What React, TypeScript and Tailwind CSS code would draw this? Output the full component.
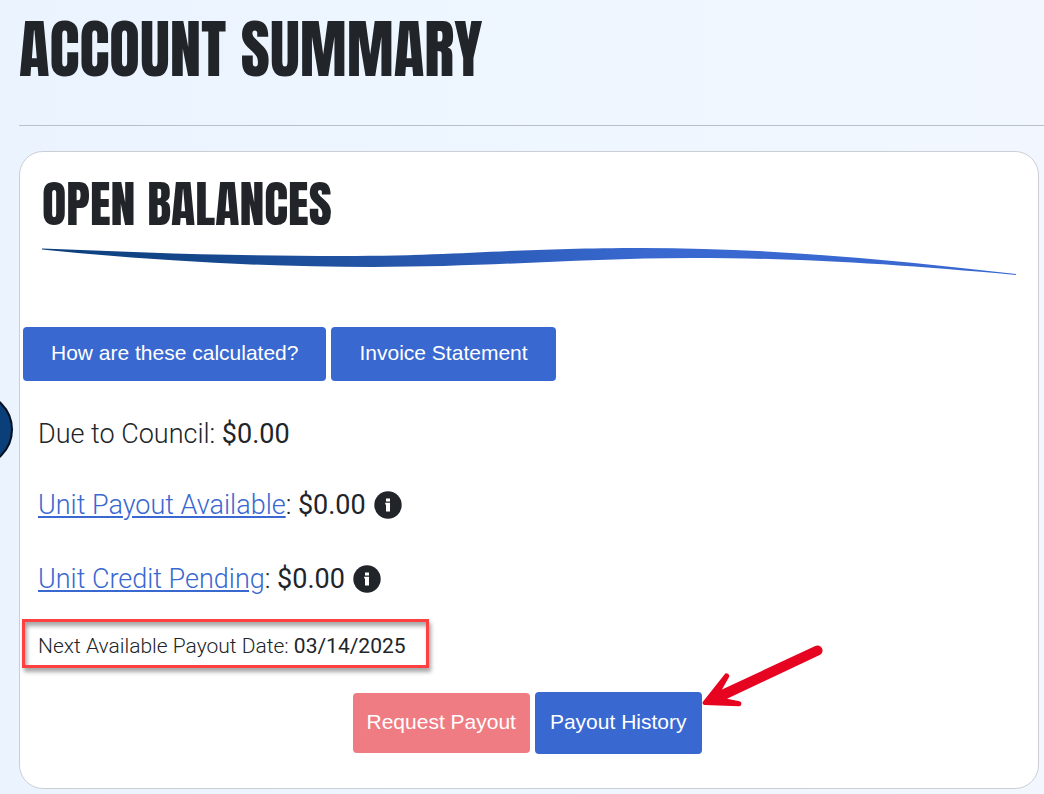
const headingFont = "font-['Anton','Impact','Liberation_Sans_Narrow',sans-serif]";
const bodyFont = "font-['Roboto',sans-serif]";
const buttonFont = "font-['Liberation_Sans',Arial,sans-serif]";

function Swoosh() {
  return (
    <svg
      viewBox="0 0 974 28"
      preserveAspectRatio="none"
      className="h-7 w-full"
      aria-hidden="true"
    >
      <defs>
        <linearGradient id="swoosh" x1="0" x2="1" y1="0" y2="0">
          <stop offset="0" stopColor="#0b3f7a" />
          <stop offset="0.15" stopColor="#14468a" />
          <stop offset="0.62" stopColor="#3968d0" />
          <stop offset="1" stopColor="#3968d0" />
        </linearGradient>
      </defs>
      <path
        fill="url(#swoosh)"
        d="M0 0.500 C95 4.500 190 8 300 8 C420 8 470 0 600 0 C730 0 850 12 974 26 V27 C850 16 760 10 650 10 C540 10 450 19 330 19 C220 19 110 12.500 0 1.500 Z"
      />
    </svg>
  );
}

function InfoIcon() {
  return (
    <svg viewBox="0 0 28 28" className="size-7" aria-hidden="true">
      <circle cx="14" cy="14" r="13.700" fill="#212529" />
      <path fill="#fff" d="M12 7.500h4v3h-4z M11.200 11.800h4.800v8.700h-4v-7h-0.800z" />
    </svg>
  );
}

function Arrow() {
  return (
    <svg
      viewBox="0 0 124 66"
      className="pointer-events-none absolute -top-12 left-full h-[66px] w-[124px]"
      aria-hidden="true"
    >
      <path
        fill="#e60420"
        d="M113.300 2 A5 5 0 0 1 117.700 11 L25 54.800 L37.500 57.200 A2.600 2.600 0 0 1 37 62.300 L2.500 61 A2.300 2.300 0 0 1 0.700 58 L22.300 30.800 A2.600 2.600 0 0 1 26.900 33.300 L20 45.500 Z"
      />
    </svg>
  );
}

type BalanceProps = {
  label: string;
  amount: string;
};

function Balance({ label, amount }: BalanceProps) {
  return (
    <div className="flex items-center text-[27px] leading-8">
      <p>
        <a href="#" className="text-[#3968d0] underline">
          {label}
        </a>
        : <span className="font-normal">{amount}</span>
      </p>
      <button type="button" aria-label={`About ${label}`} className="ml-2">
        <InfoIcon />
      </button>
    </div>
  );
}

export default function App() {
  return (
    <div
      className={`relative min-h-screen overflow-hidden bg-linear-to-r from-[#ebf3ff] via-[#eef6ff] to-[#f2f7ff] pb-1 pl-[19px] font-light text-[#212529] ${bodyFont}`}
    >
      <button
        type="button"
        aria-label="Open menu"
        className="absolute top-[392px] -left-[62px] size-[75px] rounded-full border-2 border-[#04101f] bg-[#0b3f7a]"
      />

      <header className="border-b border-[#b9c0ca] pt-3.5 pb-[39px]">
        <h1 className={`text-[63px] leading-[72px] font-normal uppercase ${headingFont}`}>
          Account Summary
        </h1>
      </header>

      <main className="mt-[25px] mr-[5px] rounded-3xl border border-[#cbcfd4] bg-white px-[3px] pb-[34px]">
        <div className="px-[19px] pt-6">
          <h2 className={`text-[50px] leading-[56px] font-normal uppercase ${headingFont}`}>
            Open Balances
          </h2>
          <div className="mt-4">
            <Swoosh />
          </div>
        </div>

        <div className={`mt-[51px] flex gap-[5px] text-[21px] text-white ${buttonFont}`}>
          <button type="button" className="h-[54px] rounded bg-[#3968d0] px-7 pb-0.5">
            How are these calculated?
          </button>
          <button type="button" className="h-[54px] rounded bg-[#3968d0] px-7 pb-0.5">
            Invoice Statement
          </button>
        </div>

        <div className="px-[15px]">
          <p className="mt-[37px] text-[27px] leading-8">
            Due to Council: <span className="font-normal">$0.00</span>
          </p>
          <div className="mt-[39px]">
            <Balance label="Unit Payout Available" amount="$0.00" />
          </div>
          <div className="mt-[42px]">
            <Balance label="Unit Credit Pending" amount="$0.00" />
          </div>
        </div>

        <p className="mt-6 -ml-px w-fit border-3 border-[#ff4040] pt-2.5 pr-5 pb-[5px] pl-[13px] text-[21px] leading-7 shadow-[2px_4px_4px_rgba(0,0,0,0.35),inset_2px_4px_4px_rgba(0,0,0,0.35)]">
          Next Available Payout Date: <span className="font-normal">03/14/2025</span>
        </p>

        <div
          className={`mt-6 flex items-center justify-center gap-[5px] pr-1 text-[21px] text-white ${buttonFont}`}
        >
          <button
            type="button"
            disabled
            className="h-[60px] rounded bg-[#ef7c82] px-3.5 pb-0.5"
          >
            Request Payout
          </button>
          <div className="relative">
            <button type="button" className="block h-[62px] rounded bg-[#3968d0] px-[15px] pb-0.5">
              Payout History
            </button>
            <Arrow />
          </div>
        </div>
      </main>
    </div>
  );
}
